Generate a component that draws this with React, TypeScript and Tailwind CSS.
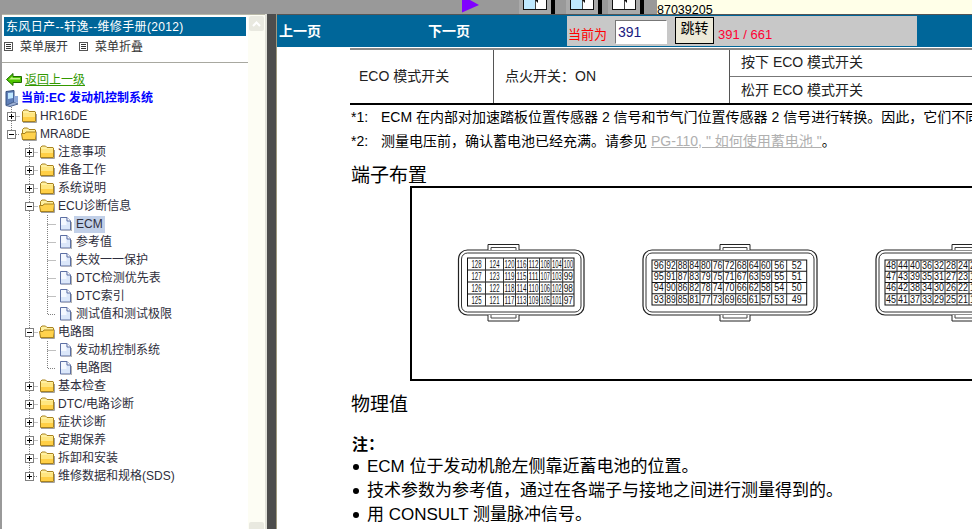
// one 18x18 piece of the tree's dotted guide lines
function Guide({ kind, box }: { kind: "blank" | "I" | "T" | "L"; box?: "plus" | "minus" }) {
  return (
    <svg width="18" height="18" viewBox="0 0 18 18" className="shrink-0">
      <g stroke="#808080" strokeDasharray="1 1" fill="none">
        {kind === "I" && <path d="M9.5 0V18" />}
        {kind === "T" && <path d="M9.5 0V18M9.5 9.5H18" />}
        {kind === "L" && <path d="M9.5 0V9.5H18" />}
      </g>
      {box && (
        <g>
          <rect x="5.5" y="5.5" width="8" height="8" fill="#fff" stroke="#808080" />
          <path d={box === "plus" ? "M7 9.5H12M9.5 7V12" : "M7 9.5H12"} stroke="#000" />
        </g>
      )}
    </svg>
  );
}

function Folder({ open }: { open?: boolean }) {
  return (
    <svg width="16" height="14" viewBox="0 0 16 14" className="shrink-0 -ml-[1px]">
      <path d="M1.5 3V2.5L3 1H6.5L8 2.5H14L14.5 3V12.5H1.5Z" fill="#fff0a0" stroke="#a8821f" />
      {open ? (
        <path d="M0.5 6.5H4L5 5H15.5L14.5 12.5H1.5Z" fill="#ffd24d" stroke="#a8821f" />
      ) : (
        <>
          <path d="M2 4H14V8H2Z" fill="#ffe680" />
          <path d="M2 8H14V12H2Z" fill="#ffcf45" />
        </>
      )}
      <path d="M2 13.5H15.5V5" stroke="#a0a0a0" fill="none" />
    </svg>
  );
}

function FileIcon() {
  return (
    <svg width="13" height="14" viewBox="0 0 13 14" className="shrink-0 ml-[1px]">
      <path d="M1.5 0.5H8L11.5 4V13H1.5Z" fill="#dbe7fa" stroke="#5c6fa3" />
      <path d="M8 0.5V4H11.5" fill="#fff" stroke="#5c6fa3" />
      <path d="M2 1H7V5H7.5V8H2Z" fill="#f4f8ff" />
      <path d="M12.5 5V14H3" stroke="#b0b0b0" fill="none" />
    </svg>
  );
}

type Row = {
  guides: ("blank" | "I" | "T" | "L")[];
  box?: "plus" | "minus";
  icon: "folder" | "open" | "file";
  label: string;
  active?: boolean;
};

const L2 = (label: string, box: "plus" | "minus" = "plus", last = false): Row => ({
  guides: ["blank", last ? "L" : "T"],
  box,
  icon: box === "plus" ? "folder" : "open",
  label,
});
const L3 = (label: string, last = false, active = false): Row => ({
  guides: ["blank", "I", last ? "L" : "T"],
  icon: "file",
  label,
  active,
});

const rows: Row[] = [
  { guides: ["T"], box: "plus", icon: "folder", label: "HR16DE" },
  { guides: ["L"], box: "minus", icon: "open", label: "MRA8DE" },
  L2("注意事项"),
  L2("准备工作"),
  L2("系统说明"),
  L2("ECU诊断信息", "minus"),
  L3("ECM", false, true),
  L3("参考值"),
  L3("失效一一保护"),
  L3("DTC检测优先表"),
  L3("DTC索引"),
  L3("测试值和测试极限", true),
  L2("电路图", "minus"),
  L3("发动机控制系统"),
  L3("电路图", true),
  L2("基本检查"),
  L2("DTC/电路诊断"),
  L2("症状诊断"),
  L2("定期保养"),
  L2("拆卸和安装"),
  L2("维修数据和规格(SDS)", "plus", true),
];

function TreeRow({ row }: { row: Row }) {
  return (
    <div className="flex h-[18px] items-center">
      {row.guides.map((g, i) => (
        <Guide key={i} kind={g} box={i === row.guides.length - 1 ? row.box : undefined} />
      ))}
      <span className="flex w-[18px] shrink-0 items-center justify-start pl-[2px]">
        {row.icon === "file" ? <FileIcon /> : <Folder open={row.icon === "open"} />}
      </span>
      <span className={`px-[2px] leading-[17px] whitespace-nowrap text-[#2e2e3c] ${row.active ? "bg-[#c2d0e8]" : ""}`}>
        {row.label}
      </span>
    </div>
  );
}

function MenuGlyph() {
  return (
    <svg width="9" height="9" viewBox="0 0 9 9" className="shrink-0">
      <rect x="0.5" y="0.5" width="8" height="8" fill="#fff" stroke="#555" />
      <path d="M2 2.5H7M2 4.5H7M2 6.5H7" stroke="#333" />
    </svg>
  );
}

function ToolTile({ panes }: { panes: string[] }) {
  return (
    <div className="flex h-full w-[36px] shrink-0 bg-[#aaaaaa] pl-[4px]">
      <svg width="24" height="14" viewBox="0 0 24 14" className="shrink-0">
        <rect x="0.5" y="-3" width="23" height="12.5" fill={panes[0]} stroke="#111" />
        <rect x="12" y="-3" width="11" height="12" fill={panes[1]} />
        <path d="M12.5 -3V9" stroke="#444" />
        <path d="M12 0L15 3V0Z" fill="#111" />
      </svg>
      <span className="ml-[4px] h-full w-[4px] bg-black" />
    </div>
  );
}

function Connector({
  x,
  right,
  top,
  bottom,
  tab,
  cols,
  rowsOf,
}: {
  x: number;
  right: number;
  top: number;
  bottom: number;
  tab: [number, number];
  cols: number[];
  rowsOf: number[][];
}) {
  const rowH = (bottom - top) / 4;
  return (
    <g>
      <rect x={x - 9} y="250" width={right - x + 19} height="65" rx="9" fill="#fff" stroke="#222" strokeWidth="1.2" />
      <rect x={x - 6} y="253" width={right - x + 13} height="59" rx="6" fill="#fff" stroke="#333" />
      <path d={`M${tab[0]} 250V244.5H${tab[1]}V250`} fill="#fff" stroke="#222" />
      <path d={`M${tab[0] + 3} 250V247.5H${tab[1] - 3}V250`} fill="none" stroke="#444" />
      <path d={`M${tab[0]} 315V321H${tab[1]}V315`} fill="#fff" stroke="#222" />
      <path d={`M${tab[0] + 3} 315V318H${tab[1] - 3}V315`} fill="none" stroke="#444" />
      <rect x={cols[0]} y={top} width={cols[cols.length - 1] - cols[0]} height={bottom - top} fill="#fff" stroke="#111" />
      {[1, 2, 3].map((r) => (
        <path key={r} d={`M${cols[0]} ${top + r * rowH}H${cols[cols.length - 1]}`} stroke="#111" />
      ))}
      {cols.slice(1, -1).map((c) => (
        <path key={c} d={`M${c} ${top}V${bottom}`} stroke="#333" />
      ))}
      {rowsOf.map((vals, r) =>
        vals.map((v, i) => (
          <text
            key={v}
            x={(cols[i] + cols[i + 1]) / 2}
            y={top + r * rowH + rowH - 2.4}
            textAnchor="middle"
            fontSize="10"
            fill="#111"
            textLength={Math.min(cols[i + 1] - cols[i] - 2, 10)}
            lengthAdjust="spacingAndGlyphs"
          >
            {v}
          </text>
        )),
      )}
    </g>
  );
}

const seq = (start: number, count: number) => Array.from({ length: count }, (_, i) => start - i * 4);

export default function App() {
  return (
    <div className="flex h-screen w-full flex-col overflow-hidden bg-[#999999] font-['Liberation_Sans','Noto_Sans_CJK_SC',sans-serif] text-[12px]">
      {/* top strip, cut off by the frameset */}
      <div className="flex h-[14px] shrink-0 bg-[#999999]">
        <svg width="17" height="14" viewBox="0 0 17 14" className="ml-[462px] shrink-0">
          <path d="M0 0H8L17 5L0 12.5Z" fill="#8000ff" />
        </svg>
        <div className="ml-[36px] w-[4px]" />
        <ToolTile panes={["#bfe9ff", "#ffffff"]} />
        <div className="w-[11px]" />
        <ToolTile panes={["#bfe9ff", "#ffffff"]} />
        <div className="w-[6px]" />
        <ToolTile panes={["#ffffff", "#ffffff"]} />
        <div className="w-[13px]" />
        <div className="flex-1 overflow-hidden bg-[#ffffe8] pt-[3px] text-[12.5px] leading-[14px] text-black">87039205</div>
      </div>

      <div className="flex min-h-0 flex-1">
        {/* left frame */}
        <aside className="ml-[2px] flex w-[263px] shrink-0 border-t border-[#b8b8a8] bg-white">
          <div className="w-[246px] shrink-0">
            <div className="mt-[2px] ml-[2px] flex h-[19px] w-[242px] items-center bg-[#006699] pl-[2px] tracking-[0.35px] text-white">
              东风日产--轩逸--维修手册(2012)
            </div>
            <div className="ml-[2px] flex h-[20px] items-center pt-[1px] text-[#333333]">
              <MenuGlyph />
              <span className="ml-[7px]">菜单展开</span>
              <span className="ml-[11px]">
                <MenuGlyph />
              </span>
              <span className="ml-[7px]">菜单折叠</span>
            </div>
            <div className="mt-[6px] h-[1px] bg-[#a8a8a0]" />
            <div className="mt-[7px] flex h-[19px] items-center pl-[4px]">
              <svg width="16" height="13" viewBox="0 0 16 13" className="shrink-0">
                <path d="M0.5 6.5L7 0.5V3.5H15.5V9.5H7V12.5Z" fill="#4fc400" stroke="#1f6b00" />
                <path d="M3 6.5L6.5 3.5V5H14V6.5Z" fill="#c4f58a" />
              </svg>
              <a className="ml-[3px] text-[#339900] underline">返回上一级</a>
            </div>
            <div className="flex h-[18px] items-center pl-[3px]">
              <svg width="14" height="17" viewBox="0 0 14 17" className="shrink-0">
                <path d="M1 1.5L9 0.5V12L1 15.5Z" fill="#5f7fb8" stroke="#33507f" />
                <path d="M3 3L8 2.5V8L3 9Z" fill="#bfe7ff" />
                <path d="M1 15.5L5 16.5L13 14L9 12Z" fill="#9fb3d6" stroke="#4d6593" />
                <path d="M9 6H13V13L9 12Z" fill="#8ea9da" />
              </svg>
              <span className="ml-[2px] whitespace-nowrap font-bold text-[#0000ff]">当前:EC 发动机控制系统</span>
            </div>
            <div>
              {rows.map((row, i) => (
                <TreeRow key={i} row={row} />
              ))}
            </div>
          </div>
          {/* scrollbar */}
          <div className="flex w-[17px] shrink-0 flex-col justify-between bg-[#fdfdf4] px-[1px] pt-[1px]">
            <div className="flex h-[15px] items-center justify-center rounded-[2px] bg-[#e9e9e0] text-white">
              <svg width="9" height="6" viewBox="0 0 9 6">
                <path d="M1 5L4.5 1.5L8 5" fill="none" stroke="#fff" strokeWidth="2" />
              </svg>
            </div>
            <div className="h-[7px] rounded-t-[2px] bg-[#e9e9e0]" />
          </div>
        </aside>

        {/* splitter */}
        <div className="w-[2px] shrink-0 bg-[#e0e0d8]" />
        <div className="w-[9px] shrink-0 bg-[#4d4d4d]" />
        <div className="w-[1px] shrink-0 bg-[#a09a80]" />

        {/* right frame */}
        <main className="flex min-w-0 flex-1 flex-col overflow-hidden border-t border-[#555555] bg-white">
          <div className="flex h-[32px] shrink-0 bg-[#006699] font-bold text-white">
            <div className="flex w-[151px] items-center pl-[2px] text-[14px]">上一页</div>
            <div className="flex w-[139px] items-center text-[14px]">下一页</div>
            <div className="mt-[1px] flex h-[30px] w-[350px] items-start bg-[#c8c8c8] font-normal">
              <span className="mt-[11px] ml-[1px] text-[13px] leading-[16px] text-[#ff0000]">当前为</span>
              <input
                readOnly
                defaultValue="391"
                className="mt-[4px] ml-[8px] h-[24px] w-[52px] border border-[#777777] border-r-white border-b-white bg-white pl-[2px] text-[14px] text-[#1a1a80] outline-none"
              />
              <button className="mt-[1px] ml-[8px] flex h-[27px] w-[39px] justify-center border border-black bg-[#ece9d8] pt-[1px] text-[14px] leading-[18px] text-black">
                跳转
              </button>
              <span className="mt-[11px] ml-[4px] text-[13px] leading-[16px] text-[#ff0033]">391 / 661</span>
            </div>
            <div className="flex-1" />
          </div>

          <div className="flex-1 pl-[73px] text-black">
            {/* table carried over from the previous page */}
            <div className="mt-[1px] grid grid-cols-[144px_236px_1fr] border-t-2 border-b-2 border-t-[#888888] border-b-black text-[14px] text-[#222222]">
              <div className="flex h-[53px] items-center border-r border-[#555555] pl-[9px]">ECO 模式开关</div>
              <div className="flex items-center border-r border-[#555555] pl-[11px]">点火开关：ON</div>
              <div>
                <div className="flex h-[27px] items-center border-b border-[#777777] pb-[2px] pl-[11px]">按下 ECO 模式开关</div>
                <div className="flex h-[26px] items-center pl-[11px]">松开 ECO 模式开关</div>
              </div>
            </div>

            <div className="pl-[1px]">
              <p className="h-[24px] text-[14px] leading-[24px] whitespace-nowrap">
                *1:<span className="inline-block w-[9px]" /> ECM 在内部对加速踏板位置传感器 2 信号和节气门位置传感器 2 信号进行转换。因此，它们不同。
              </p>
              <p className="h-[24px] text-[14px] leading-[24px] whitespace-nowrap">
                *2:<span className="inline-block w-[9px]" /> 测量电压前，确认蓄电池已经充满。请参见 <span className="text-[#b0b0b0] underline">PG-110, " 如何使用蓄电池 "</span>。
              </p>

              <h2 className="mt-[10px] h-[23px] text-[19px] leading-[26px] font-normal">端子布置</h2>

              <div className="ml-[59px] h-[195px] border-2 border-r-0 border-black">
                <svg width="560" height="191" viewBox="412 188 560 191" className="font-['Liberation_Sans',sans-serif]">
                  <Connector
                    x={467.5}
                    right={574}
                    top={258}
                    bottom={306}
                    tab={[488, 519]}
                    cols={[467.5, 485.5, 503.5, 515.5, 527.5, 539.5, 551, 562.7, 574]}
                    rowsOf={[0, 1, 2, 3].map((r) => [128 - r, 124 - r, 120 - r, 116 - r, 112 - r, 108 - r, 104 - r, 100 - r])}
                  />
                  <Connector
                    x={652}
                    right={807}
                    top={260}
                    bottom={305}
                    tab={[720, 750]}
                    cols={[652, 665.3, 676.7, 688.3, 700, 711.7, 723.3, 735.7, 747.7, 760, 771.7, 786.7, 806.7]}
                    rowsOf={[0, 1, 2, 3].map((r) => seq(96 - r, 12))}
                  />
                  <Connector
                    x={885}
                    right={1120}
                    top={260}
                    bottom={305}
                    tab={[952, 985]}
                    cols={[885, 897, 909, 921, 933, 945, 957, 969, 981]}
                    rowsOf={[0, 1, 2, 3].map((r) => seq(48 - r, 8))}
                  />
                </svg>
              </div>

              <h2 className="mt-[12px] h-[23px] text-[19px] leading-[23px] font-normal">物理值</h2>

              <p className="mt-[18px] h-[21px] pl-[1px] text-[16px] leading-[22px] font-bold">注：</p>
              <ul className="text-[17px]">
                {["ECM 位于发动机舱左侧靠近蓄电池的位置。", "技术参数为参考值，通过在各端子与接地之间进行测量得到的。", "用 CONSULT 测量脉冲信号。"].map((t) => (
                  <li key={t} className="flex h-[24px] items-center whitespace-nowrap">
                    <span className="mr-[8px] ml-[2px] h-[6px] w-[6px] shrink-0 rounded-full bg-black" />
                    {t}
                  </li>
                ))}
              </ul>
            </div>
          </div>
        </main>
      </div>
    </div>
  );
}
